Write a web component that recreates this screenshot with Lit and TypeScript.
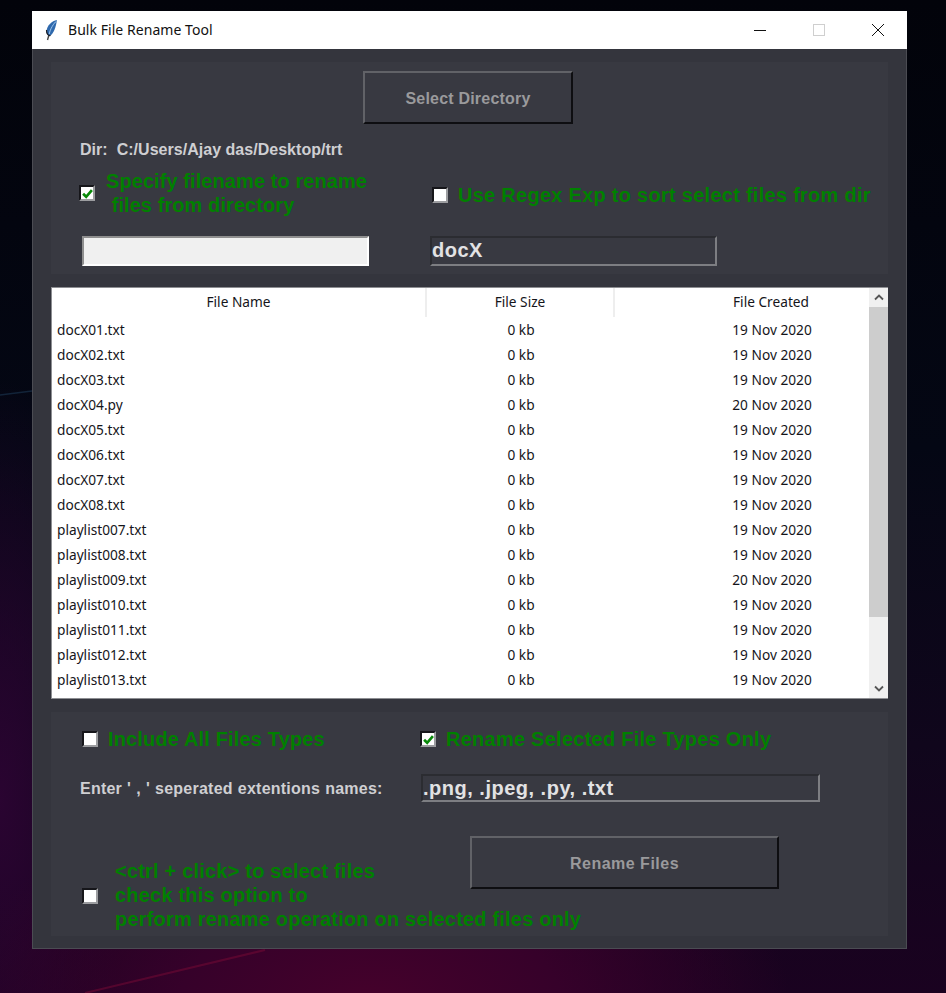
import { LitElement, html, css, svg } from "lit";
import { customElement } from "lit/decorators.js";

const rows: [string, string][] = [
  ["docX01.txt", "19 Nov 2020"],
  ["docX02.txt", "19 Nov 2020"],
  ["docX03.txt", "19 Nov 2020"],
  ["docX04.py", "20 Nov 2020"],
  ["docX05.txt", "19 Nov 2020"],
  ["docX06.txt", "19 Nov 2020"],
  ["docX07.txt", "19 Nov 2020"],
  ["docX08.txt", "19 Nov 2020"],
  ["playlist007.txt", "19 Nov 2020"],
  ["playlist008.txt", "19 Nov 2020"],
  ["playlist009.txt", "20 Nov 2020"],
  ["playlist010.txt", "19 Nov 2020"],
  ["playlist011.txt", "19 Nov 2020"],
  ["playlist012.txt", "19 Nov 2020"],
  ["playlist013.txt", "19 Nov 2020"],
];

const check = svg`<svg viewBox="0 0 10 10" width="11" height="11"><path d="M1 5.2 L3.8 8 L9 2" fill="none" stroke="#0a8a0a" stroke-width="2.4"/></svg>`;

@customElement("app-root")
export class AppRoot extends LitElement {
  static styles = css`
    :host {
      display: block;
      position: relative;
      width: 946px;
      height: 993px;
      overflow: hidden;
      background:
        radial-gradient(ellipse 420px 210px at 370px 1000px, #45012b 0%, #36012a 45%, rgba(40, 1, 35, 0) 100%),
        radial-gradient(ellipse 130px 420px at 0px 800px, #2a0431 0%, rgba(30, 4, 45, 0) 100%),
        linear-gradient(180deg, #02030a 0%, #040714 45%, #10061c 75%, #1a0220 100%);
      font-family: "Liberation Sans", Arial, sans-serif;
    }
    .backdrop {
      position: absolute;
      inset: 0;
    }
    .window {
      position: absolute;
      left: 32px;
      top: 11px;
      width: 875px;
      height: 938px;
      box-sizing: border-box;
      background: #34353d;
      border: 1px solid #4b4c53;
      border-top: none;
      display: flex;
      flex-direction: column;
    }
    .titlebar {
      height: 38px;
      flex: none;
      margin: 0 -1px;
      background: #fff;
      display: flex;
      align-items: center;
      color: #111;
      font: 14px "Noto Sans", sans-serif;
    }
    .feather {
      margin-left: 12px;
      width: 16px;
      height: 22px;
    }
    .title {
      margin-left: 8px;
      flex: 1;
      position: relative;
      top: -1px;
      letter-spacing: 0.05px;
    }
    .ctl {
      width: 59px;
      height: 38px;
      display: flex;
      align-items: center;
      justify-content: center;
    }
    .frame {
      margin: 13px 18px 0;
      background: #383941;
      box-sizing: border-box;
    }
    .top {
      height: 212px;
      padding-top: 9px;
      display: flex;
      flex-direction: column;
    }
    .btn {
      box-sizing: border-box;
      display: flex;
      align-items: center;
      justify-content: center;
      border: 2px solid;
      border-color: #616267 #0e0e11 #0e0e11 #616267;
      color: #9a9a9c;
      font-weight: 700;
      font-size: 16px;
      background: #383941;
      padding-top: 2px;
    }
    .btn.dir {
      width: 210px;
      height: 53px;
      margin-left: 312px;
      letter-spacing: 0.2px;
    }
    .dirline {
      margin: 17px 0 0 29px;
      color: #cfcfd2;
      font-size: 16px;
      font-weight: 700;
      line-height: 18px;
      white-space: pre;
      letter-spacing: 0.03px;
    }
    .opts {
      display: grid;
      grid-template-columns: 352px 1fr;
      margin-top: 10px;
      height: 48px;
    }
    .opt {
      display: flex;
      align-items: center;
    }
    .lbl {
      color: #008000;
      font-size: 20px;
      font-weight: 700;
      line-height: 24px;
      white-space: pre;
    }
    .cb {
      box-sizing: border-box;
      width: 16px;
      height: 16px;
      flex: none;
      background: #fff;
      border: 2px solid;
      border-color: #16161a #9c9da0 #9c9da0 #16161a;
      display: flex;
      align-items: center;
      justify-content: center;
      overflow: hidden;
    }
    .o1 {
      padding-left: 28px;
    }
    .o1 .lbl {
      margin-left: 11px;
      letter-spacing: 0.08px;
    }
    .o2 {
      padding: 4px 0 0 29px;
    }
    .o2 .lbl {
      margin-left: 10px;
      letter-spacing: 0.27px;
    }
    .entries {
      display: grid;
      grid-template-columns: 287px 287px;
      column-gap: 61px;
      margin: 19px 0 0 31px;
    }
    .entry {
      box-sizing: border-box;
      height: 30px;
      border: 2px solid;
      border-color: #2b2c31 #7d7e82 #7d7e82 #2b2c31;
      color: #e2e2e4;
      font-size: 20px;
      font-weight: 700;
      display: flex;
      align-items: center;
      padding: 0 0 2px 0;
      white-space: pre;
      letter-spacing: 0.5px;
    }
    .entry.light {
      background: #f0f0f0;
      border-color: #8f8f8f #fff #fff #8f8f8f;
    }
    .tree {
      display: flex;
      height: 412px;
      background: #fff;
      border: solid #8d8e92;
      border-width: 1px 0 1px 1px;
      box-sizing: border-box;
    }
    .table {
      flex: 1;
      overflow: hidden;
      min-width: 0;
      color: #15151a;
      font: 13.7px "Noto Sans", sans-serif;
    }
    .tr {
      display: grid;
      grid-template-columns: 375px 188px 314px;
      height: 25px;
      line-height: 24px;
      width: 877px;
    }
    .tr.head {
      height: 30px;
      line-height: 28px;
    }
    .head > div {
      text-align: center;
      border-right: 2px solid #eeeeee;
      height: 29px;
      box-sizing: border-box;
    }
    .name {
      padding-left: 5px;
    }
    .c {
      text-align: center;
    }
    .scroll {
      width: 19px;
      flex: none;
      background: #f0f0f0;
      display: flex;
      flex-direction: column;
    }
    .arrow {
      height: 19px;
      flex: none;
      display: flex;
      align-items: center;
      justify-content: center;
      background: #f0f0f0;
    }
    .thumb {
      height: 310px;
      flex: none;
      background: #cdcdcd;
    }
    .track {
      flex: 1;
    }
    .bottom {
      height: 224px;
      padding-top: 15px;
      display: flex;
      flex-direction: column;
    }
    .row1 {
      display: grid;
      grid-template-columns: 338px 1fr;
      padding-left: 31px;
      height: 24px;
    }
    .row1 .lbl {
      margin-left: 10px;
      letter-spacing: 0.15px;
    }
    .row1 .wide {
      letter-spacing: 0.25px;
    }
    .extrow {
      display: flex;
      align-items: center;
      margin: 23px 0 0 29px;
      height: 28px;
    }
    .extlbl {
      width: 341px;
      padding-top: 2px;
      color: #cfcfd2;
      font-size: 16px;
      font-weight: 700;
      flex: none;
      word-spacing: 0.4px;
      letter-spacing: 0.23px;
    }
    .entry.ext {
      width: 399px;
      height: 28px;
      padding-bottom: 0;
    }
    .lower {
      margin-top: 34px;
      height: 100px;
      position: relative;
      display: flex;
      padding-left: 31px;
    }
    .btn.ren {
      width: 309px;
      height: 53px;
      position: absolute;
      left: 419px;
      top: 0;
      letter-spacing: 0.5px;
    }
    .sel {
      display: flex;
      align-items: center;
      height: 72px;
      margin-top: 23px;
    }
    .sel .lbl {
      margin-left: 17px;
      letter-spacing: 0.2px;
    }
    .sel .cb {
      position: relative;
      top: 1px;
    }
  `;

  private cb(on: boolean) {
    return html`<span class="cb">${on ? check : ""}</span>`;
  }

  render() {
    return html`
      <svg class="backdrop" viewBox="0 0 946 993" aria-hidden="true">
        <path d="M0 395 L32 391" stroke="#2c5a80" stroke-width="1.5" opacity=".35" />
        <path d="M85 993 L265 950" stroke="#7a0a35" stroke-width="2" opacity=".5" />
      </svg>
      <div class="window">
        <div class="titlebar">
          <svg class="feather" viewBox="0 0 16 22">
            <path d="M3.5 21 L5.5 14" stroke="#444" stroke-width="1.4" />
            <path d="M13 1 C8 1.5 2.5 7 2.5 12.5 C2.5 15.5 4.5 17.5 6.5 16.5 C9.5 14.5 12 8 13 1 Z" fill="#2f69ad" />
            <path d="M12.5 2 C10 4 6 10 5.3 15" stroke="#a8cdf0" stroke-width=".9" fill="none" />
            <path d="M2.5 11 C2.5 14.5 4 17 6.5 16.5" stroke="#1d1d22" stroke-width="1.2" fill="none" />
          </svg>
          <span class="title">Bulk File Rename Tool</span>
          <span class="ctl">
            <svg width="12" height="12"><path d="M0 6.5 H12" stroke="#111" stroke-width="1" /></svg>
          </span>
          <span class="ctl">
            <svg width="12" height="12"><rect x=".5" y=".5" width="11" height="11" fill="none" stroke="#cfcfcf" /></svg>
          </span>
          <span class="ctl">
            <svg width="12" height="12"><path d="M0 0 L12 12 M12 0 L0 12" stroke="#111" stroke-width="1" /></svg>
          </span>
        </div>

        <div class="frame top">
          <div class="btn dir">Select Directory</div>
          <div class="dirline">Dir:  C:/Users/Ajay das/Desktop/trt</div>
          <div class="opts">
            <div class="opt o1">
              ${this.cb(true)}
              <span class="lbl">Specify filename to rename
 files from directory</span>
            </div>
            <div class="opt o2">
              ${this.cb(false)}
              <span class="lbl">Use Regex Exp to sort select files from dir</span>
            </div>
          </div>
          <div class="entries">
            <div class="entry light"></div>
            <div class="entry">docX</div>
          </div>
        </div>

        <div class="frame tree">
          <div class="table">
            <div class="tr head">
              <div>File Name</div>
              <div>File Size</div>
              <div>File Created</div>
            </div>
            ${rows.map(
              ([n, d]) => html`<div class="tr">
                <div class="name">${n}</div>
                <div class="c">0 kb</div>
                <div class="c">${d}</div>
              </div>`
            )}
          </div>
          <div class="scroll">
            <div class="arrow">
              <svg width="10" height="7"><path d="M1 5.5 L5 1.5 L9 5.5" fill="none" stroke="#555" stroke-width="1.8" /></svg>
            </div>
            <div class="thumb"></div>
            <div class="track"></div>
            <div class="arrow">
              <svg width="10" height="7"><path d="M1 1.5 L5 5.5 L9 1.5" fill="none" stroke="#555" stroke-width="1.8" /></svg>
            </div>
          </div>
        </div>

        <div class="frame bottom">
          <div class="row1">
            <div class="opt">${this.cb(false)}<span class="lbl">Include All Files Types</span></div>
            <div class="opt">${this.cb(true)}<span class="lbl wide">Rename Selected File Types Only</span></div>
          </div>
          <div class="extrow">
            <span class="extlbl">Enter ' , ' seperated extentions names:</span>
            <div class="entry ext">.png, .jpeg, .py, .txt</div>
          </div>
          <div class="lower">
            <div class="sel">
              ${this.cb(false)}
              <span class="lbl">&lt;ctrl + click&gt; to select files
check this option to
perform rename operation on selected files only</span>
            </div>
            <div class="btn ren">Rename Files</div>
          </div>
        </div>
      </div>
    `;
  }
}
